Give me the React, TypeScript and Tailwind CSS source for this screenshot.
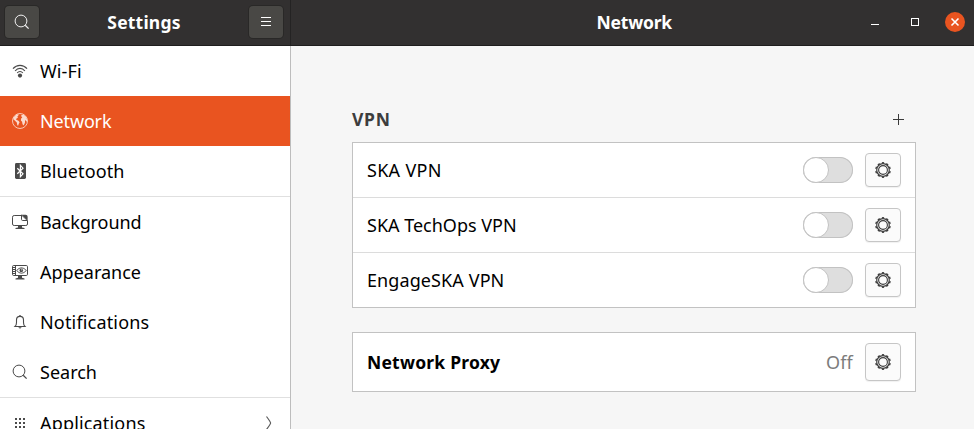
import type { ReactNode } from 'react';

const ink = '#4a4a4a';

function SearchGlyph({ color }: { color: string }) {
  return (
    <svg width="16" height="16" viewBox="0 0 16 16" fill="none" stroke={color}>
      <circle cx="7" cy="7" r="5.9" />
      <path d="M11.2 11.2 14.6 14.6" strokeWidth="1.3" />
    </svg>
  );
}

function WifiGlyph() {
  return (
    <svg width="16" height="16" viewBox="0 0 16 16" fill="none" stroke={ink}>
      <path d="M1 5.6C4.8 1.2 11.2 1.2 15 5.6" strokeWidth="1.2" />
      <path d="M3.1 8C5.8 4.6 10.2 4.6 12.9 8" strokeWidth="1.2" />
      <path d="M5.2 10C6.6 8 9.4 8 10.8 10" strokeWidth="1.2" />
      <circle cx="8" cy="12.6" r="2.1" fill={ink} stroke="none" />
    </svg>
  );
}

function GlobeGlyph() {
  return (
    <svg width="16" height="16" viewBox="0 0 16 16" fill="none">
      <circle cx="8" cy="8" r="7.5" stroke="#f8c6b3" strokeWidth="1" />
      <path d="M1.6 4.4 4.4 1.5 6.6 1.3 6.4 2.6 5.4 3.6 5.9 4.7 4.6 5.4 3.9 6.3 4.8 7 6.4 7.8 7.6 9.2 6.8 10.8 6 13 5.2 11.8 4.8 9.6 3.2 8 1.2 6Z" fill="#fbd9cc" />
      <path d="M9.2 2.3 11.4 1.6 13.8 3.6 15 6.2 15.2 8.6 14.4 8.6 13.6 7.2 13 7.6 13 9.4 12.2 11.6 11.2 12.6 10.4 10.8 10.1 8.8 8.9 7.4 9.1 5.6 10.3 4.4 9.4 3.6Z" fill="#fbd9cc" />
    </svg>
  );
}

function BluetoothGlyph() {
  return (
    <svg width="16" height="16" viewBox="0 0 16 16" fill="none">
      <rect x="3" y="0" width="11" height="16" rx="1.4" fill={ink} />
      <path d="M5.3 5.2 11 10.8 8.4 13.6V2.4L11 5.2 5.3 10.8" stroke="#fff" strokeWidth="1.2" />
    </svg>
  );
}

function BackgroundGlyph() {
  return (
    <svg width="16" height="16" viewBox="0 0 16 16" fill="none">
      <path d="M9 1.5H2.2Q.5 1.5.5 3.2V10Q.5 11.5 2.2 11.5H13.8Q15.5 11.5 15.5 10V6.5" stroke={ink} />
      <path d="M9.5.8H13.6Q15.6.8 15.6 2.8V6.8Z" fill={ink} />
      <path d="M9.5 1V5.3Q9.5 6.5 10.7 6.5H15.3Z" fill="#fff" stroke={ink} />
      <path d="M6 12H10V13.4L12.5 14V15H3.5V14L6 13.4Z" fill={ink} />
    </svg>
  );
}

function AppearanceGlyph() {
  return (
    <svg width="16" height="16" viewBox="0 0 16 16" fill="none">
      <rect x=".5" y="1.5" width="15" height="10" rx="1.2" stroke={ink} />
      <path d="M3.5 1.5V11.5M1 3.5H3.5M1 5.5H3.5M1 7.5H3.5M1 9.5H3.5" stroke={ink} />
      <path d="M4.6 6.5Q9.4 1 14.4 6.5 9.4 12 4.6 6.5Z" stroke={ink} strokeWidth=".9" />
      <circle cx="9.3" cy="6.4" r="1.8" fill={ink} />
      <circle cx="9.8" cy="5.8" r=".6" fill="#fff" />
      <path d="M6 12H10V13.8L12.5 14.4V15.4H3.5V14.4L6 13.8Z" fill={ink} />
    </svg>
  );
}

function BellGlyph() {
  return (
    <svg width="16" height="16" viewBox="0 0 16 16" fill="none">
      <path d="M3 12.5C4.2 11.4 4.5 10.5 4.5 8.5V6C4.5 3.5 6 2.4 8 2.4S11.5 3.5 11.5 6V8.5C11.5 10.5 11.8 11.4 13 12.5Z" stroke={ink} strokeWidth="1.1" />
      <path d="M8 1.1V2.4" stroke={ink} strokeWidth="1.3" />
      <path d="M6.2 13.3H9.8L8 14.8Z" fill={ink} />
    </svg>
  );
}

function GridGlyph() {
  return (
    <svg width="16" height="16" viewBox="0 0 16 16" fill={ink} shapeRendering="crispEdges">
      {[3, 7, 11].map((y) => [3, 7, 11].map((x) => <rect key={`${x}-${y}`} x={x} y={y} width="2" height="2" />))}
    </svg>
  );
}

function GearGlyph() {
  return (
    <svg width="16" height="16" viewBox="0 0 16 16" fill="none" stroke="#3d3d3d">
      <circle cx="8" cy="8" r="6.3" strokeWidth="1.2" />
      <circle cx="8" cy="8" r="7.2" strokeWidth="1.4" pathLength="100" strokeDasharray="5 5" strokeDashoffset="2.5" transform="rotate(-90 8 8)" />
      <circle cx="8" cy="8" r="4.4" strokeWidth="1.1" />
    </svg>
  );
}

function NavRow({ icon, label, tracking = '', active = false, chevron = false }: {
  icon: ReactNode;
  label: string;
  tracking?: string;
  active?: boolean;
  chevron?: boolean;
}) {
  return (
    <div className={`flex h-[50px] shrink-0 items-center gap-3 pl-3 pr-[14px] ${active ? 'bg-[#e95420] text-white' : 'text-black'}`}>
      {icon}
      <span className={`flex-1 whitespace-nowrap ${tracking}`}>{label}</span>
      {chevron && (
        <svg width="16" height="16" viewBox="0 0 16 16" fill="none" stroke="#5a5a5a">
          <path d="M6.5 1.5Q10.6 7 10.6 8T6.5 14.5" strokeWidth="1.2" />
        </svg>
      )}
    </div>
  );
}

function GearButton({ tall = false }: { tall?: boolean }) {
  return (
    <button className={`flex w-9 items-center justify-center rounded border border-[#c6c6c6] bg-[#fbfbfb] shadow-[0_1px_1px_rgba(0,0,0,0.06)] ${tall ? 'h-[38px]' : 'h-[34px]'}`}>
      <GearGlyph />
    </button>
  );
}

function VpnRow({ label, tracking }: { label: string; tracking: string }) {
  return (
    <div className="flex h-[54px] items-center gap-3 px-[14px]">
      <span className={`flex-1 whitespace-nowrap ${tracking}`}>{label}</span>
      <span className="flex h-[26px] w-[50px] rounded-full bg-[#dedede] ring-1 ring-inset ring-[#c2c2c2]">
        <span className="h-[26px] w-[26px] rounded-full border border-[#c2c2c2] bg-white" />
      </span>
      <GearButton />
    </div>
  );
}

export default function App() {
  return (
    <div className="flex h-[429px] w-[974px] flex-col overflow-hidden bg-[#f6f6f6] font-['Noto_Sans',sans-serif] text-[18px] leading-6 text-black">
      <header className="flex h-[46px] shrink-0 border-b border-[#1f1e1e] bg-[#323030] text-white">
        <div className="flex w-[291px] items-center justify-between border-r border-[#242323] pb-px pl-[5px] pr-[7px]">
          <button className="flex h-8 w-[34px] items-center justify-center rounded bg-[#494845] ring-1 ring-[#292827]">
            <SearchGlyph color="#f0f0f0" />
          </button>
          <span className="text-[17.5px] font-bold tracking-[0.2px]">Settings</span>
          <button className="flex h-8 w-[34px] items-center justify-center rounded bg-[#494845] ring-1 ring-[#292827]">
            <svg width="16" height="16" viewBox="0 0 16 16" stroke="#fff">
              <path d="M3 3.5H13M3 7.5H13M3 11.5H13" />
            </svg>
          </button>
        </div>
        <div className="flex flex-1 items-center justify-end pb-px pr-[9px]">
          <span className="mr-[199px] text-[17.5px] font-bold tracking-[-0.2px]">Network</span>
          <svg width="8" height="8" viewBox="0 0 8 8" stroke="#fff">
            <path d="M0 6.5H8" />
          </svg>
          <svg className="ml-8" width="8" height="8" viewBox="0 0 8 8" fill="none" stroke="#fff">
            <rect x=".5" y=".5" width="7" height="7" />
          </svg>
          <svg className="ml-[26px]" width="20" height="20" viewBox="0 0 20 20" stroke="#fff">
            <circle cx="10" cy="10" r="10" fill="#e95420" stroke="none" />
            <path d="M6.5 6.5 13.5 13.5M13.5 6.5 6.5 13.5" strokeWidth="1.6" />
          </svg>
        </div>
      </header>
      <div className="flex min-h-0 flex-1">
        <nav className="flex w-[291px] shrink-0 flex-col overflow-hidden border-r border-[#bdbdbd] bg-white">
          <NavRow icon={<WifiGlyph />} label="Wi-Fi" tracking="tracking-[0.1px]" />
          <NavRow icon={<GlobeGlyph />} label="Network" tracking="tracking-[-0.15px]" active />
          <NavRow icon={<BluetoothGlyph />} label="Bluetooth" tracking="tracking-[0.12px]" />
          <div className="h-px shrink-0 bg-[#e0e0e0]" />
          <NavRow icon={<BackgroundGlyph />} label="Background" tracking="tracking-[-0.1px]" />
          <NavRow icon={<AppearanceGlyph />} label="Appearance" />
          <NavRow icon={<BellGlyph />} label="Notifications" tracking="tracking-[0.17px]" />
          <NavRow icon={<SearchGlyph color={ink} />} label="Search" />
          <div className="h-px shrink-0 bg-[#e0e0e0]" />
          <NavRow icon={<GridGlyph />} label="Applications" tracking="tracking-[0.17px]" chevron />
        </nav>
        <main className="flex flex-1 flex-col pl-[61px] pr-[58px] pt-[61px]">
          <div className="flex h-[25px] items-center justify-between pr-3">
            <h2 className="pb-0.5 text-[17.5px] font-bold tracking-[0.7px] text-[#3d3d3d]">VPN</h2>
            <svg width="11" height="11" viewBox="0 0 11 11" stroke="#3a3a3a">
              <path d="M0 5.5H11M5.5 0V11" />
            </svg>
          </div>
          <section className="mt-[10px] flex flex-col gap-px border border-[#c2c2c2] bg-[#dcdcdc] *:bg-white">
            <VpnRow label="SKA VPN" tracking="tracking-[0.3px]" />
            <VpnRow label="SKA TechOps VPN" tracking="tracking-normal" />
            <VpnRow label="EngageSKA VPN" tracking="tracking-[0.1px]" />
          </section>
          <section className="mt-6 flex h-[60px] items-center gap-3 border border-[#c2c2c2] bg-white px-[14px]">
            <span className="flex-1 text-[17.5px] font-bold tracking-[0.22px]">Network Proxy</span>
            <span className="tracking-[0.2px] text-[#7c7c7c]">Off</span>
            <GearButton tall />
          </section>
        </main>
      </div>
    </div>
  );
}
